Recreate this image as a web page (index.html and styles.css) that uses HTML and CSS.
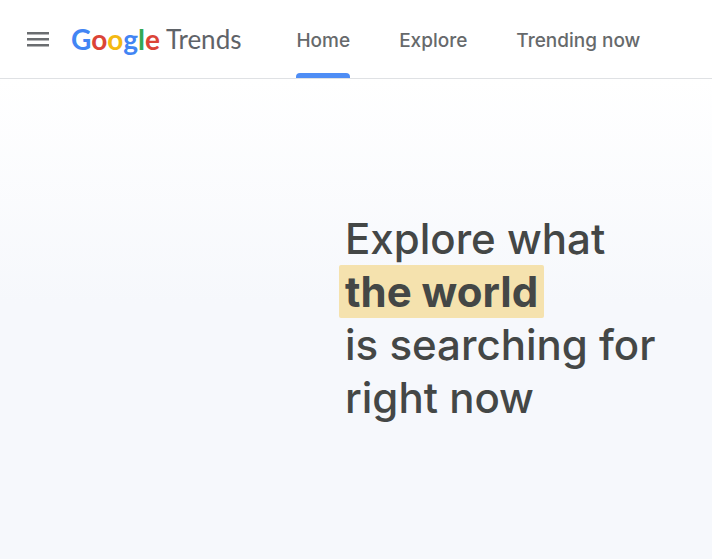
FILE: index.html
```html
<!DOCTYPE html>
<html lang="en">
<head>
	<meta charset="utf-8">
	<meta name="viewport" content="width=device-width, initial-scale=1">
	<title>Google Trends</title>
	<link rel="stylesheet" href="styles.css">
</head>
<body>
	<header class="header">
		<button class="menu-button" type="button" aria-label="Main menu">
			<svg class="menu-icon" width="22" height="16" viewBox="0 0 22 16">
				<path d="M0 2.2h22M0 8.2h22M0 14.2h22" fill="none" stroke="#6a6d70" stroke-width="2.4"/>
			</svg>
		</button>
		<a class="logo" href="#">
			<span class="logo-google"><span class="blue">G</span><span class="red">o</span><span class="yellow">o</span><span class="blue">g</span><span class="green">l</span><span class="red">e</span></span>
			<span class="logo-trends">Trends</span>
		</a>
		<nav class="nav">
			<a class="nav-link active" href="#">Home</a>
			<a class="nav-link" href="#">Explore</a>
			<a class="nav-link" href="#">Trending now</a>
		</nav>
	</header>

	<main class="hero">
		<h1 class="hero-title">
			Explore what<br>
			<strong class="highlight">the world</strong><br>
			is searching for<br>
			right now
		</h1>
	</main>
</body>
</html>
```
FILE: styles.css
```css
* {
	box-sizing: border-box;
}

body {
	display: flex;
	flex-direction: column;
	min-height: 100vh;
	margin: 0;
	font-family: Inter, Roboto, sans-serif;
	color: #444746;
	background-color: #f6f8fc;
}

.header {
	display: flex;
	align-items: stretch;
	height: 79px;
	padding-left: 27px;
	background-color: #fff;
	border-bottom: 1px solid #dfe1e4;
}

.menu-button {
	display: flex;
	align-items: center;
	padding: 0;
	border: 0;
	background: none;
	cursor: pointer;
}

/* logo */
.logo {
	display: flex;
	align-items: center;
	gap: 6px;
	margin-left: 22px;
	font-family: Lato, sans-serif;
	font-size: 26px;
	line-height: 32px;
	text-decoration: none;
	color: #5f6368;
}

.logo-google {
	font-size: 28px;
	font-weight: 700;
}

.blue {
	color: #4285f4;
}

.red {
	color: #db4437;
}

.yellow {
	color: #f4b912;
}

.green {
	color: #34a853;
}

/* main navigation */
.nav {
	display: flex;
	gap: 49px;
	margin-left: 55px;
}

.nav-link {
	display: flex;
	position: relative;
	align-items: center;
	padding-top: 3px;
	font-size: 19px;
	font-weight: 500;
	line-height: 24px;
	white-space: nowrap;
	text-decoration: none;
	color: #66696b;
}

/* bar under the current page */
.active::after {
	content: '';
	position: absolute;
	left: 0;
	right: 0;
	bottom: 0;
	height: 5px;
	border-radius: 4px 4px 0 0;
	background-color: #4e8df5;
}

.hero {
	display: flex;
	flex: 1;
	padding: 133px 24px 56px 345px;
	background: linear-gradient(#fff, #f6f8fc 224px);
}

.hero-title {
	margin: 0;
	font-size: 42px;
	font-weight: 500;
	line-height: 53px;
	white-space: nowrap;
}

.highlight {
	display: inline-block;
	margin-left: -6px;
	padding: 0 6px;
	border-radius: 2px;
	font-weight: 700;
	background-color: #f5e2ae;
}
```
